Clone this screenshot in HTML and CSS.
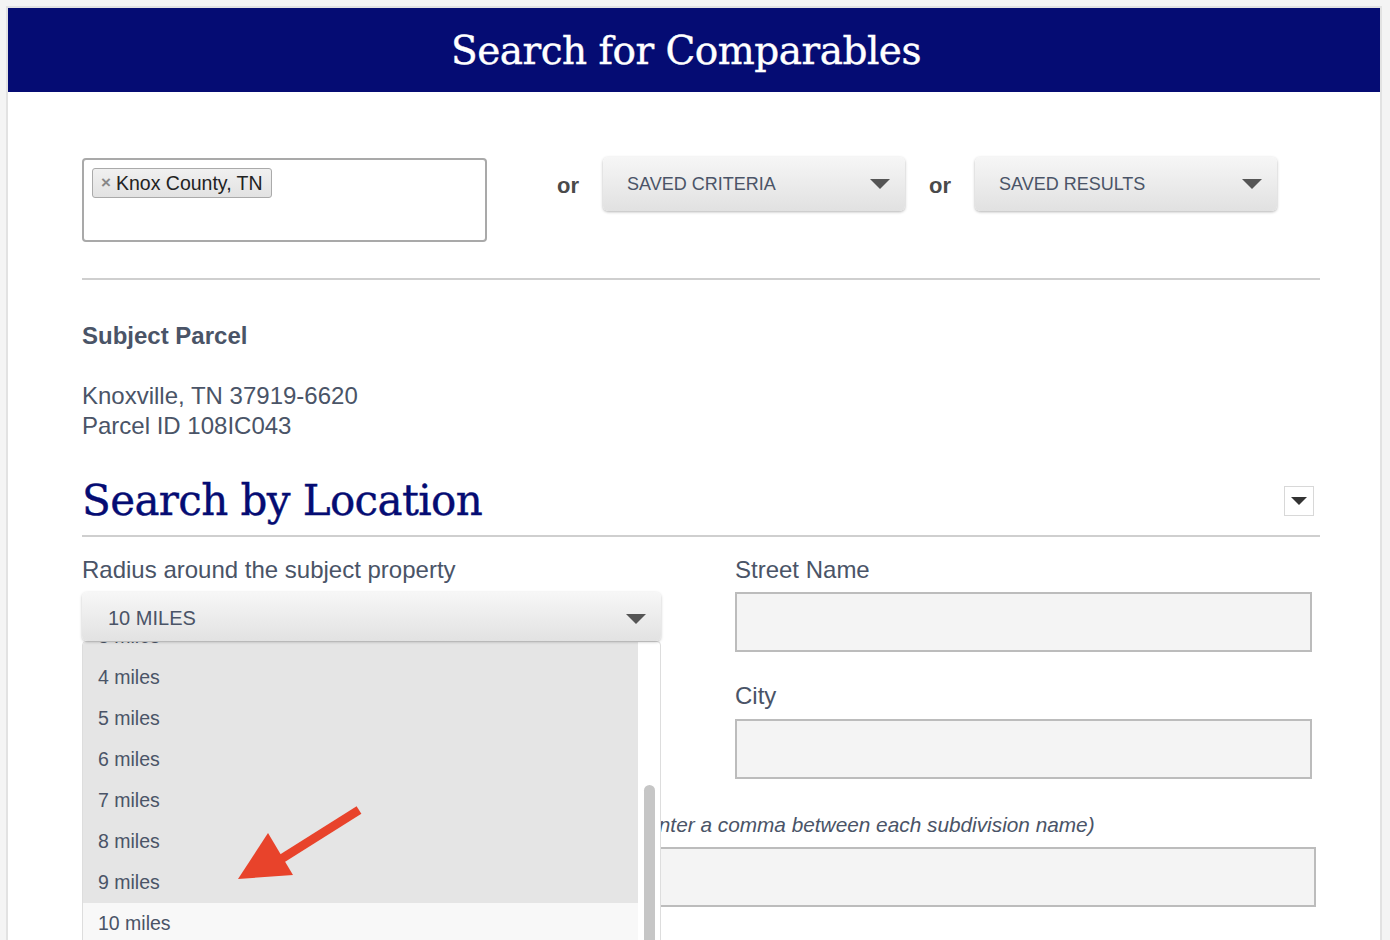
FILE: index.html
```html
<!DOCTYPE html>
<html lang="en">
  <head>
    <meta charset="UTF-8" />
    <meta name="viewport" content="width=device-width, initial-scale=1.0" />
    <title>Search for Comparables</title>
    <link rel="stylesheet" href="styles.css">
  </head>
  <body>
    <div class="page">
      <header class="banner">
        <h1 class="banner-title">Search for Comparables</h1>
      </header>

      <main class="content">
        <div class="source-row">
          <div class="tag-input">
            <span class="tag"><span class="tag-remove">&times;</span>Knox County, TN</span>
          </div>
          <span class="or">or</span>
          <button class="drop-btn" type="button">
            <span>SAVED CRITERIA</span>
            <span class="caret"></span>
          </button>
          <span class="or">or</span>
          <button class="drop-btn" type="button">
            <span>SAVED RESULTS</span>
            <span class="caret"></span>
          </button>
        </div>

        <hr class="divider" />

        <section class="subject">
          <h3 class="subject-title">Subject Parcel</h3>
          <p class="subject-lines">
            Knoxville, TN 37919-6620<br />
            Parcel ID 108IC043
          </p>
        </section>

        <section class="location">
          <div class="section-head">
            <h2 class="section-title">Search by Location</h2>
            <button class="collapse-btn" type="button"><span class="caret caret-dark"></span></button>
          </div>

          <div class="loc-grid">
            <div class="field">
              <label class="field-label">Radius around the subject property</label>
              <div class="select-wrap">
                <div class="select-box">
                  <span>10 MILES</span>
                  <span class="caret"></span>
                </div>

                <!-- open dropdown, scrolled to the bottom -->
                <div class="select-menu">
                  <ul class="menu-list">
                    <li>3 miles</li>
                    <li>4 miles</li>
                    <li>5 miles</li>
                    <li>6 miles</li>
                    <li>7 miles</li>
                    <li>8 miles</li>
                    <li>9 miles</li>
                    <li class="is-active">10 miles</li>
                  </ul>
                  <div class="menu-scroll"><span class="menu-thumb"></span></div>
                </div>

                <svg class="pointer-arrow" width="125" height="82" viewBox="0 0 125 82">
                  <line x1="121" y1="10" x2="40" y2="61" stroke="#e8432b" stroke-width="9" />
                  <polygon points="0,79 30,33 55,75" fill="#e8432b" />
                </svg>
              </div>
            </div>

            <div class="field-stack">
              <div class="field">
                <label class="field-label">Street Name</label>
                <input class="text-input" type="text" />
              </div>
              <div class="field">
                <label class="field-label">City</label>
                <input class="text-input" type="text" />
              </div>
            </div>
          </div>

          <div class="field field-wide">
            <label class="field-label field-label-note">Subdivision Name(s) (to search multiple subdivisions, please enter a comma between each subdivision name)</label>
            <input class="text-input" type="text" />
          </div>
        </section>
      </main>
    </div>
  </body>
</html>
```

FILE: styles.css
```css
:root {
  --navy: #050c73;
  --text-color: #4a5467;
  --line-color: #cfcfcf;
  --input-bg: #f4f4f4;
  --input-border: #bcbcbc;
}

body {
  margin: 0;
  background-color: #f4f4f4;
  font-family: "Liberation Sans", Arial, sans-serif;
  color: var(--text-color);
  height: 940px;
  overflow: hidden;
}

.page {
  margin: 6px 0 0 6px;
  width: 1372px;
  min-height: 1000px;
  border: 2px solid #e2e2e2;
  background-color: #fff;
}

.banner {
  height: 84px;
  background-color: var(--navy);
  display: flex;
  justify-content: center;
  align-items: center;
}

.banner-title {
  margin: 0 0 0 -16px;
  color: #fff;
  font-family: "DejaVu Serif", serif;
  font-weight: normal;
  font-size: 39px;
  letter-spacing: -0.5px;
  -webkit-text-stroke: 0.4px #fff;
}

.content {
  padding: 65px 60px 0 74px;
}

/* source row */
.source-row {
  display: flex;
  align-items: flex-start;
}

.tag-input {
  box-sizing: border-box;
  width: 405px;
  height: 84px;
  border: 2px solid #a9a9a9;
  border-radius: 4px;
  padding: 8px 8px;
  margin-top: 1px;
}

.tag {
  display: inline-flex;
  align-items: center;
  height: 30px;
  box-sizing: border-box;
  padding: 0 8px 0 8px;
  border: 1px solid #aaa;
  border-radius: 3px;
  background: linear-gradient(#f0f0f0, #e2e2e2);
  color: #222;
  font-size: 19.5px;
}

.tag-remove {
  color: #888;
  font-weight: bold;
  font-size: 17px;
  margin-right: 5px;
}

.or {
  font-weight: bold;
  font-size: 22px;
  color: #4a4a4a;
  margin: 16px 24px 0 70px;
}

.drop-btn + .or {
  margin-left: 24px;
}

.drop-btn {
  display: flex;
  align-items: center;
  justify-content: space-between;
  box-sizing: border-box;
  width: 302px;
  height: 54px;
  padding: 0 15px 0 24px;
  border: 0;
  border-radius: 5px;
  background: linear-gradient(#f6f6f6, #e1e1e1);
  box-shadow: 0 1px 3px rgba(0, 0, 0, 0.3);
  font-family: inherit;
  font-size: 18px;
  color: var(--text-color);
}

.caret {
  width: 0;
  height: 0;
  border-left: 10px solid transparent;
  border-right: 10px solid transparent;
  border-top: 10px solid #555;
}

.divider {
  border: 0;
  border-top: 2px solid var(--line-color);
  margin: 36px 0 0;
}

/* subject parcel */
.subject-title {
  margin: 41px 0 0;
  font-size: 24px;
  line-height: 30px;
}

.subject-lines {
  margin: 30px 0 0;
  font-size: 24px;
  line-height: 30px;
}

/* search by location */
.section-head {
  display: flex;
  justify-content: space-between;
  align-items: center;
  margin-top: 32px;
  padding-bottom: 6px;
  border-bottom: 2px solid var(--line-color);
}

.section-title {
  margin: 0;
  color: var(--navy);
  font-family: "DejaVu Serif", serif;
  font-weight: normal;
  font-size: 42px;
  letter-spacing: -0.6px;
  line-height: 56px;
  -webkit-text-stroke: 0.4px var(--navy);
}

.collapse-btn {
  display: flex;
  align-items: center;
  justify-content: center;
  width: 30px;
  height: 30px;
  margin-right: 6px;
  padding: 0;
  border: 1px solid #d8d8d8;
  background: #fff;
}

.caret-dark {
  border-left-width: 8px;
  border-right-width: 8px;
  border-top: 8px solid #333;
}

.loc-grid {
  display: grid;
  grid-template-columns: 579px 577px;
  column-gap: 74px;
  margin-top: 18px;
}

.field {
  display: flex;
  flex-direction: column;
}

.field-label {
  font-size: 24px;
  line-height: 30px;
  margin-bottom: 7px;
}

.field-stack .field + .field {
  margin-top: 29px;
}

.field-stack .field + .field .field-label {
  margin-bottom: 8px;
}

.text-input {
  box-sizing: border-box;
  height: 60px;
  border: 2px solid var(--input-border);
  background-color: var(--input-bg);
  font-size: 20px;
}

.field-wide {
  margin-top: 31px;
  width: 1234px;
}

.field-label-note {
  font-style: italic;
  font-size: 20.8px;
}

/* radius select + open menu */
.select-wrap {
  position: relative;
}

.select-box {
  display: flex;
  align-items: center;
  justify-content: space-between;
  box-sizing: border-box;
  height: 49px;
  padding: 4px 15px 0 26px;
  border-radius: 5px;
  background: linear-gradient(#f7f7f7, #e2e2e2);
  box-shadow: 0 1px 3px rgba(0, 0, 0, 0.25);
  font-size: 20px;
  position: relative;
  z-index: 2;
}

.select-menu {
  position: absolute;
  top: 49px;
  left: 0;
  width: 579px;
  height: 330px;
  box-sizing: border-box;
  border: 1px solid #ddd;
  border-radius: 4px;
  background: #fff;
  overflow: hidden;
  display: flex;
  z-index: 1;
}

.menu-list {
  list-style: none;
  margin: -26px 0 0;
  padding: 0;
  flex: 1;
  background: #e5e5e5;
  align-self: flex-start;
}

.menu-list li {
  height: 41px;
  line-height: 41px;
  padding-left: 15px;
  font-size: 19.5px;
}

.menu-list .is-active {
  background: #f8f8f8;
}

.menu-scroll {
  width: 22px;
  position: relative;
}

.menu-thumb {
  position: absolute;
  top: 143px;
  left: 6px;
  width: 11px;
  height: 200px;
  border-radius: 6px;
  background: #c6c6c6;
}

.pointer-arrow {
  position: absolute;
  left: 156px;
  top: 208px;
  z-index: 3;
}
```
